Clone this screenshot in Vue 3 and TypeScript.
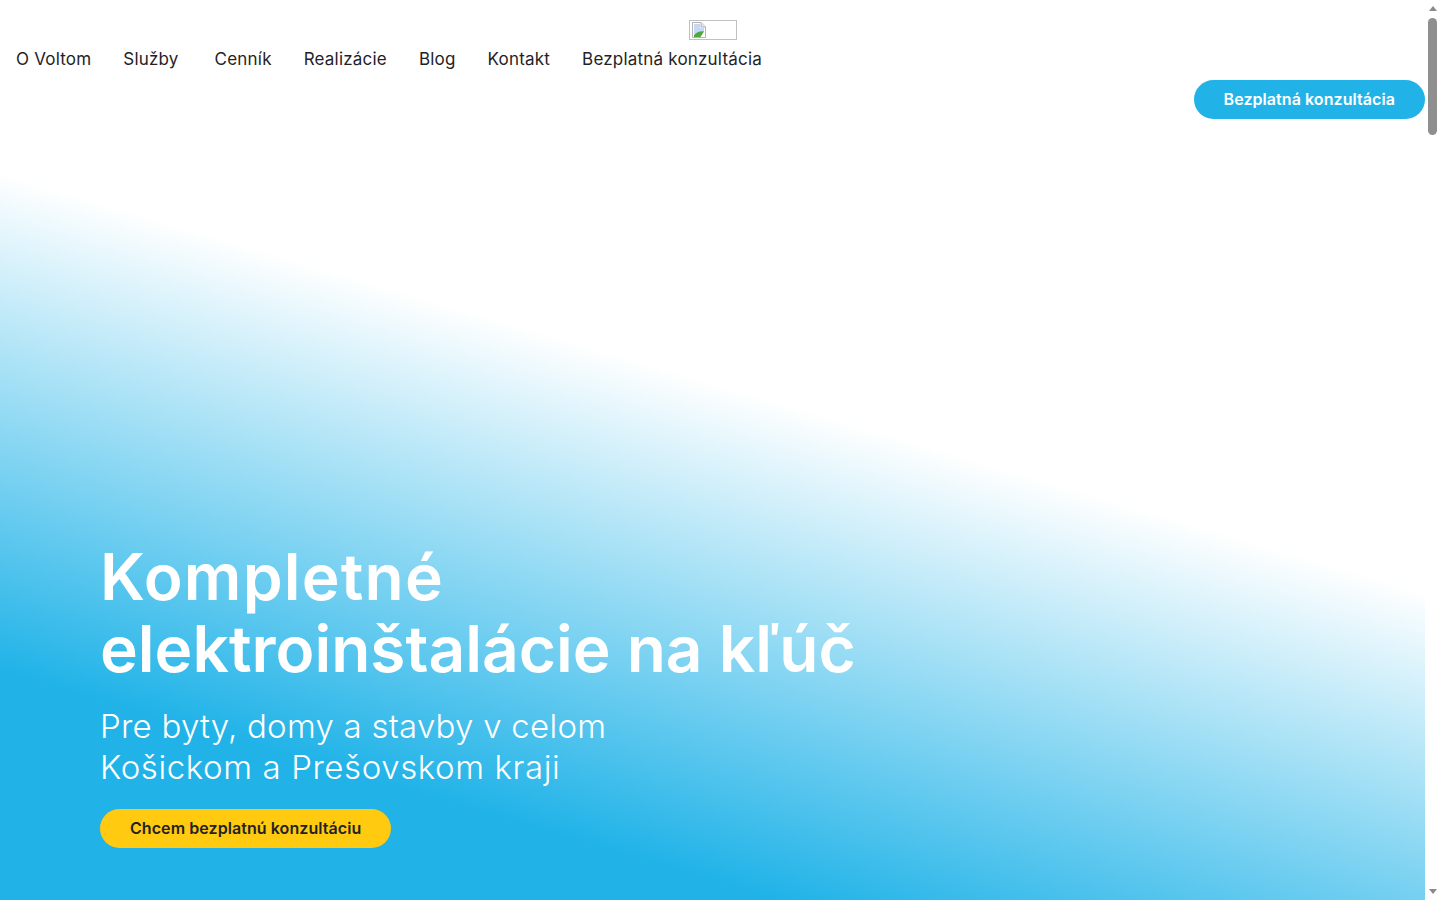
<script setup lang="ts">
type NavItem = {
  label: string
  hasMenu?: boolean
}

const navItems: NavItem[] = [
  { label: 'O Voltom' },
  { label: 'Služby', hasMenu: true },
  { label: 'Cenník' },
  { label: 'Realizácie' },
  { label: 'Blog' },
  { label: 'Kontakt' },
  { label: 'Bezplatná konzultácia' },
]
</script>

<template>
  <div class="window">
    <div class="page">
      <section class="hero">
        <header class="header">
          <div class="logo-row">
            <!-- logo image is broken in the reference -->
            <a class="logo" href="#" aria-label="Voltom">
              <svg width="18" height="18" viewBox="0 0 18 18">
                <path d="M2.500 1.500H11L15.500 6V16.500H2.500Z" fill="#fff" stroke="#b4b4b4" />
                <path d="M11 1.500V6H15.500" fill="#e4e4e4" stroke="#b4b4b4" />
                <path d="M4 3H10V7H14V11L4 13Z" fill="#c6d8f4" />
                <path d="M4 16V14C7.500 10.500 11 10 14 10.500L10.500 16Z" fill="#4fa83d" />
              </svg>
            </a>
          </div>
          <nav class="nav">
            <a
              v-for="item in navItems"
              :key="item.label"
              href="#"
              class="nav-link"
              :class="{ 'has-menu': item.hasMenu }"
            >{{ item.label }}</a>
          </nav>
          <div class="cta-row">
            <a href="#" class="btn btn-blue">Bezplatná konzultácia</a>
          </div>
        </header>

        <div class="hero-copy">
          <h1><span class="first-line">Kompletné</span><br />elektroinštalácie na kľúč</h1>
          <p>Pre byty, domy a stavby v celom<br /><span class="second-line">Košickom a Prešovskom kraji</span></p>
          <a href="#" class="btn btn-yellow">Chcem bezplatnú konzultáciu</a>
        </div>
      </section>
    </div>

    <!-- browser scrollbar, the page goes on far below the fold -->
    <aside class="scrollbar" aria-hidden="true">
      <span class="arrow arrow-up"></span>
      <span class="track"><span class="thumb"></span></span>
      <span class="arrow arrow-down"></span>
    </aside>
  </div>
</template>

<style>
html,
body {
  margin: 0;
  background: #fff;
}
</style>

<style scoped>
.window {
  display: flex;
  height: 900px;
  overflow: hidden;
  font-family: Inter, "Liberation Sans", sans-serif;
  color: #1f2328;
}

.page {
  flex: 1;
  min-width: 0;
}

.hero {
  height: 900px;
  display: flex;
  flex-direction: column;
  box-sizing: border-box;
  background: linear-gradient(196.4deg, #fff 44.8%, #21b3e8 82.5%);
}

.header {
  padding-top: 20px;
}

.logo-row {
  display: flex;
  justify-content: center;
}

.logo {
  width: 48px;
  height: 20px;
  box-sizing: border-box;
  border: 1px solid #c0c0c0;
  display: block;
}

.logo svg {
  display: block;
}

.nav {
  display: flex;
  gap: 32px;
  padding: 0 16px;
  height: 38px;
  align-items: center;
}

.nav-link {
  font-size: 17px;
  font-weight: 400;
  letter-spacing: 0.2px;
  color: #1f2328;
  text-decoration: none;
  white-space: nowrap;
}

.nav-link.has-menu {
  padding-right: 4px;
}

.cta-row {
  display: flex;
  justify-content: flex-end;
  padding-top: 2px;
}

.btn {
  display: inline-flex;
  align-items: center;
  box-sizing: border-box;
  height: 39px;
  padding: 0 30px 1px;
  border-radius: 20px;
  font-size: 16px;
  font-weight: 600;
  letter-spacing: 0.07px;
  text-decoration: none;
  white-space: nowrap;
}

.btn-blue {
  background: #21b3e8;
  color: #fff;
}

.btn-yellow {
  background: #ffca0f;
  color: #1f2328;
}

.hero-copy {
  margin-top: auto;
  padding: 0 100px 52px;
}

h1 {
  margin: 0;
  font-size: 64px;
  line-height: 72px;
  font-weight: 600;
  color: #fff;
}

.first-line {
  letter-spacing: 1.2px;
}

p {
  margin: 21px 0 21px;
  font-size: 33px;
  line-height: 41px;
  font-weight: 350;
  letter-spacing: 0.25px;
  color: #fff;
}

.second-line {
  letter-spacing: 0.6px;
}

.scrollbar {
  width: 15px;
  flex: none;
  display: flex;
  flex-direction: column;
  align-items: center;
  background: #fff;
}

.arrow {
  width: 0;
  height: 0;
  flex: none;
  border-left: 4.5px solid transparent;
  border-right: 4.5px solid transparent;
}

.arrow-up {
  margin: 6px 0 7px;
  border-bottom: 5px solid #8a8a8a;
}

.arrow-down {
  margin: 7px 0 6px;
  border-top: 5px solid #8a8a8a;
}

.track {
  flex: 1;
  width: 9px;
}

.thumb {
  display: block;
  height: 117px;
  border-radius: 5px;
  background: #8f8f8f;
}
</style>
